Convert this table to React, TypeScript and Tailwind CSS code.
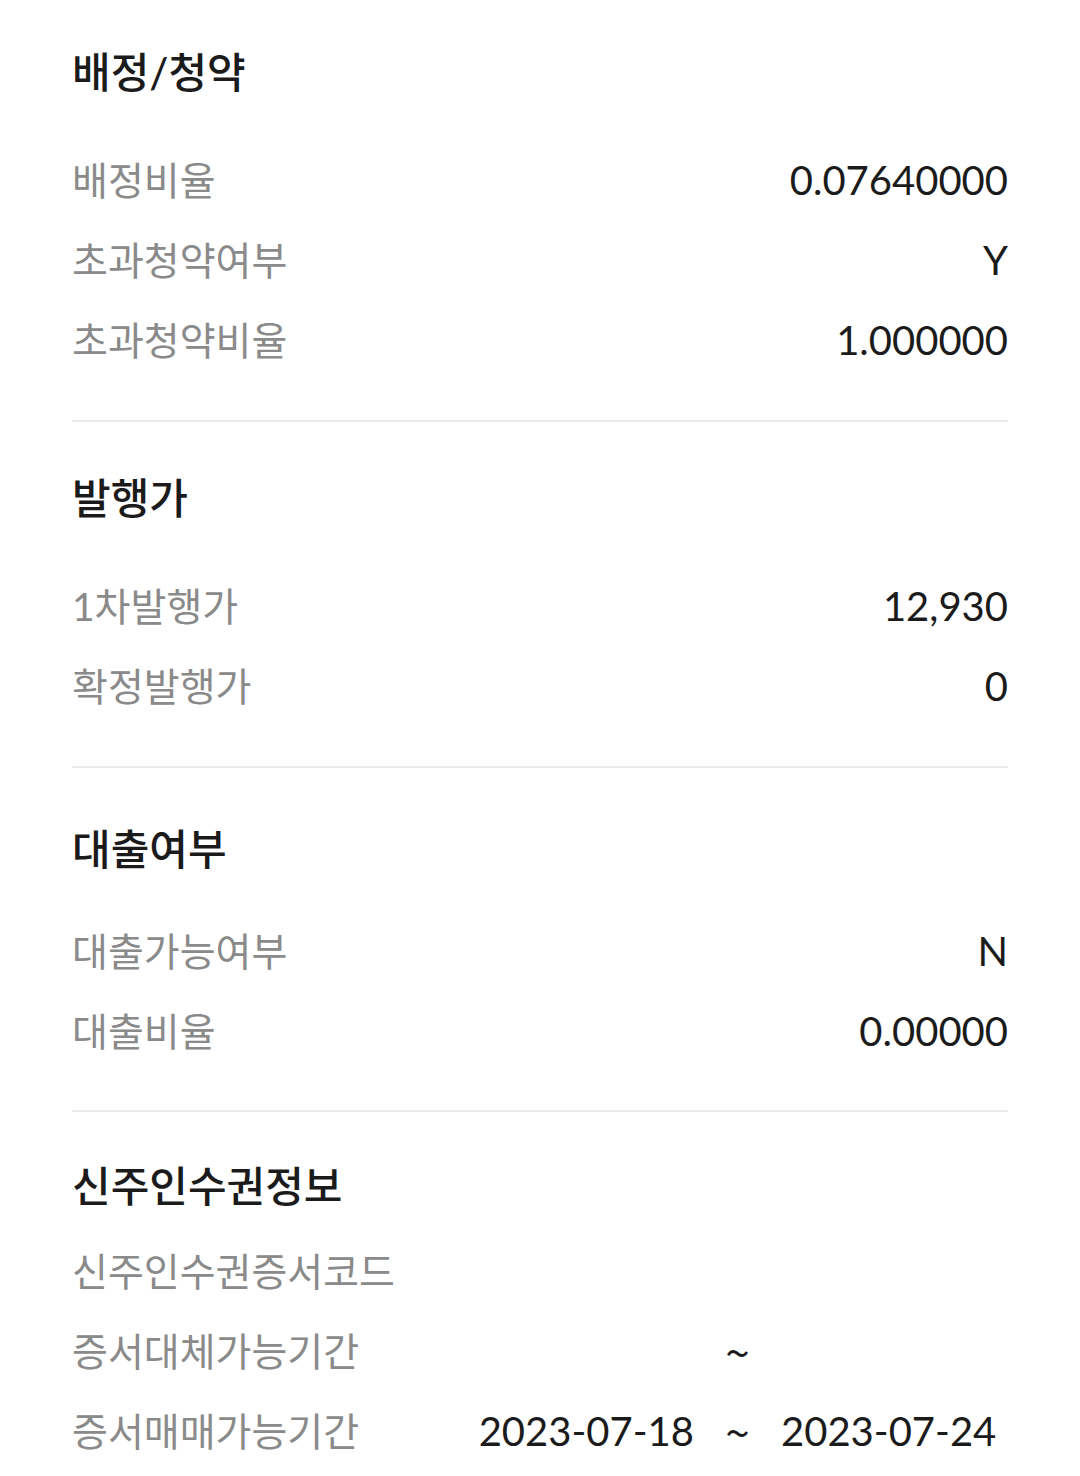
import React from "react";

type Row = { label: string; value?: React.ReactNode };

function Heading({ title, className }: { title: string; className: string }) {
  return (
    <h2
      className={`h-[56px] flex items-center text-[42px] font-medium text-[#1b1b1b] leading-none ${className}`}
    >
      {title}
    </h2>
  );
}

function InfoRow({ label, value }: Row) {
  return (
    <div className="flex h-[80px] items-center justify-between">
      <span className="text-[39px] text-[#8a8a8a] leading-none">{label}</span>
      <span className="text-[40px] text-[#1b1b1b] leading-none">{value}</span>
    </div>
  );
}

function Period({ from, to }: { from?: string; to?: string }) {
  return (
    <span className="flex items-center">
      <span className="w-[220px] text-right">{from}</span>
      <span className="w-[87px] text-center font-['Noto_Sans_CJK_KR',sans-serif] text-[44px]">~</span>
      <span className="w-[227px] text-left">{to}</span>
    </span>
  );
}

function Divider() {
  return <div className="h-[2px] bg-[#ececec]" />;
}

export default function App() {
  return (
    <div className="min-h-[1476px] w-[1080px] bg-white px-[72px] font-['Lato','Noto_Sans_CJK_KR',sans-serif]">
      <section className="pb-[40px]">
        <Heading title="배정/청약" className="pt-[44px] mb-[40px] box-content" />
        <InfoRow label="배정비율" value="0.07640000" />
        <InfoRow label="초과청약여부" value="Y" />
        <InfoRow label="초과청약비율" value="1.000000" />
      </section>
      <Divider />
      <section className="pb-[40px]">
        <Heading title="발행가" className="mt-[48px] mb-[40px]" />
        <InfoRow label="1차발행가" value="12,930" />
        <InfoRow label="확정발행가" value="0" />
      </section>
      <Divider />
      <section className="pb-[39px]">
        <Heading title="대출여부" className="mt-[53px] mb-[34px]" />
        <InfoRow label="대출가능여부" value="N" />
        <InfoRow label="대출비율" value="0.00000" />
      </section>
      <Divider />
      <section>
        <Heading title="신주인수권정보" className="mt-[46px] mb-[17px]" />
        <InfoRow label="신주인수권증서코드" value="" />
        <InfoRow label="증서대체가능기간" value={<Period />} />
        <InfoRow
          label="증서매매가능기간"
          value={<Period from="2023-07-18" to="2023-07-24" />}
        />
      </section>
    </div>
  );
}
